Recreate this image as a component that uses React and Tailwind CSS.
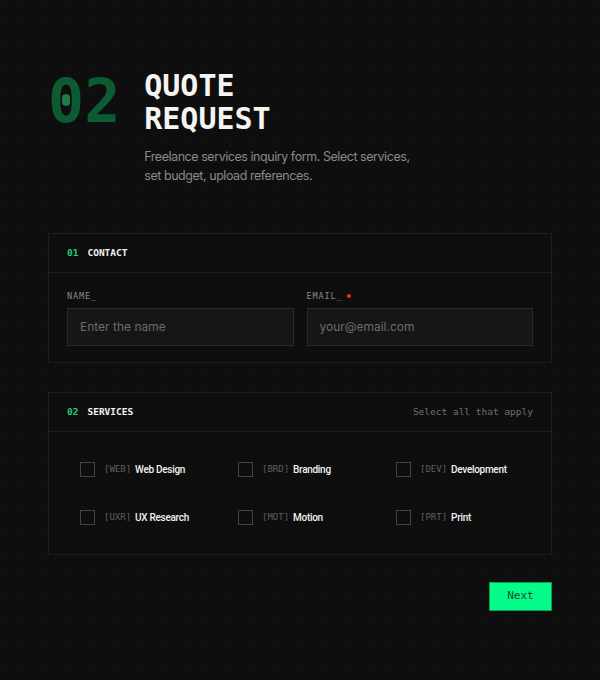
import React from "react";

const mono = { fontFamily: '"DejaVu Sans Mono", "Liberation Mono", monospace' };
const sans = { fontFamily: 'Inter, "Liberation Sans", sans-serif' };
const label = { fontFamily: 'Roboto, Inter, "Liberation Sans", sans-serif' };

const services = [
  ["WEB", "Web Design"],
  ["BRD", "Branding"],
  ["DEV", "Development"],
  ["UXR", "UX Research"],
  ["MOT", "Motion"],
  ["PRT", "Print"],
];

function CardHeader({ num, title, right }) {
  return (
    <div className="flex items-center justify-between h-[39px] px-[18px] border-b border-[#1f1f1f]">
      <div className="flex items-center gap-[9px] text-[9.5px] font-bold" style={mono}>
        <span className="text-[#1fd06e]">{num}</span>
        <span className="text-[#f2f2f2]">{title}</span>
      </div>
      {right && (
        <span className="text-[9.5px] text-[#6f6f6f]" style={mono}>
          {right}
        </span>
      )}
    </div>
  );
}

export default function App() {
  return (
    <div
      className="min-h-[680px] w-full bg-[#0e0e0e] bg-[linear-gradient(rgba(255,255,255,0.01)_1px,transparent_1px),linear-gradient(90deg,rgba(255,255,255,0.01)_1px,transparent_1px)] bg-[size:23px_23px] px-12 pt-[69px] pb-10"
      style={sans}
    >
      <div className="flex items-start gap-[24px]">
        <div className="flex text-[60px] leading-none font-bold text-[#0c5b33] mt-[2px]" style={mono}>
          <span className="inline-grid place-items-center">
            <span className="col-start-1 row-start-1">0</span>
            <span className="col-start-1 row-start-1 block w-[8px] h-[12px] rounded-full bg-[#1e7a48] -mt-[2px]"></span>
          </span>
          <span>2</span>
        </div>
        <div>
          <h1 className="text-[30px] leading-[33px] font-bold text-[#f4f4f0]" style={mono}>
            QUOTE
            <br />
            REQUEST
          </h1>
          <p className="mt-[12px] w-[275px] text-[12.5px] leading-[19px] tracking-[-0.45px] text-[#8a8a8a]">
            Freelance services inquiry form. Select services, set budget, upload references.
          </p>
        </div>
      </div>

      <div className="mt-[48px] border border-[#1f1f1f] bg-[#0e0e0e]">
        <CardHeader num="01" title="CONTACT" />
        <div className="grid grid-cols-2 gap-[13px] px-[18px] pt-[17px] pb-[16px]">
          <label className="flex flex-col gap-[5px]">
            <span className="text-[8.5px] tracking-[0.9px] text-[#8a8a8a]" style={mono}>
              NAME_
            </span>
            <input
              className="h-[38px] bg-[#161616] border border-[#2a2a2a] px-[12px] text-[12px] text-[#e5e5e5] placeholder:text-[#6b6b6b] outline-none"
              placeholder="Enter the name"
              style={sans}
            />
          </label>
          <label className="flex flex-col gap-[5px]">
            <span className="flex items-center gap-[4px] text-[8.5px] tracking-[0.9px] text-[#8a8a8a]" style={mono}>
              EMAIL_
              <span className="w-[4px] h-[4px] rounded-full bg-[#e0312f]" />
            </span>
            <input
              className="h-[38px] bg-[#161616] border border-[#2a2a2a] px-[12px] text-[12px] text-[#e5e5e5] placeholder:text-[#6b6b6b] outline-none"
              placeholder="your@email.com"
              style={sans}
            />
          </label>
        </div>
      </div>

      <div className="mt-[29px] border border-[#1f1f1f] bg-[#0e0e0e]">
        <CardHeader num="02" title="SERVICES" right="Select all that apply" />
        <div className="grid grid-cols-3 gap-x-[8px] gap-y-[8px] px-[18px] pt-[18px] pb-[16px]">
          {services.map(([code, name]) => (
            <div key={code} className="flex items-center h-[40px] px-[13px] gap-[9px]">
              <span className="w-[15px] h-[15px] border border-[#444444] shrink-0" />
              <span className="text-[9px] text-[#5f5f5f] whitespace-nowrap" style={mono}>
                [{code}]
              </span>
              <span
                className="text-[10px] font-medium tracking-[-0.3px] text-[#f2f2f2] -ml-[5px] whitespace-nowrap"
                style={label}
              >
                {name}
              </span>
            </div>
          ))}
        </div>
      </div>

      <div className="mt-[27px] flex justify-end">
        <button
          className="w-[63px] h-[29px] bg-[#05fb8a] border border-[#0a9e58] text-[11px] text-[#0d4a2c]"
          style={mono}
        >
          Next
        </button>
      </div>
    </div>
  );
}
